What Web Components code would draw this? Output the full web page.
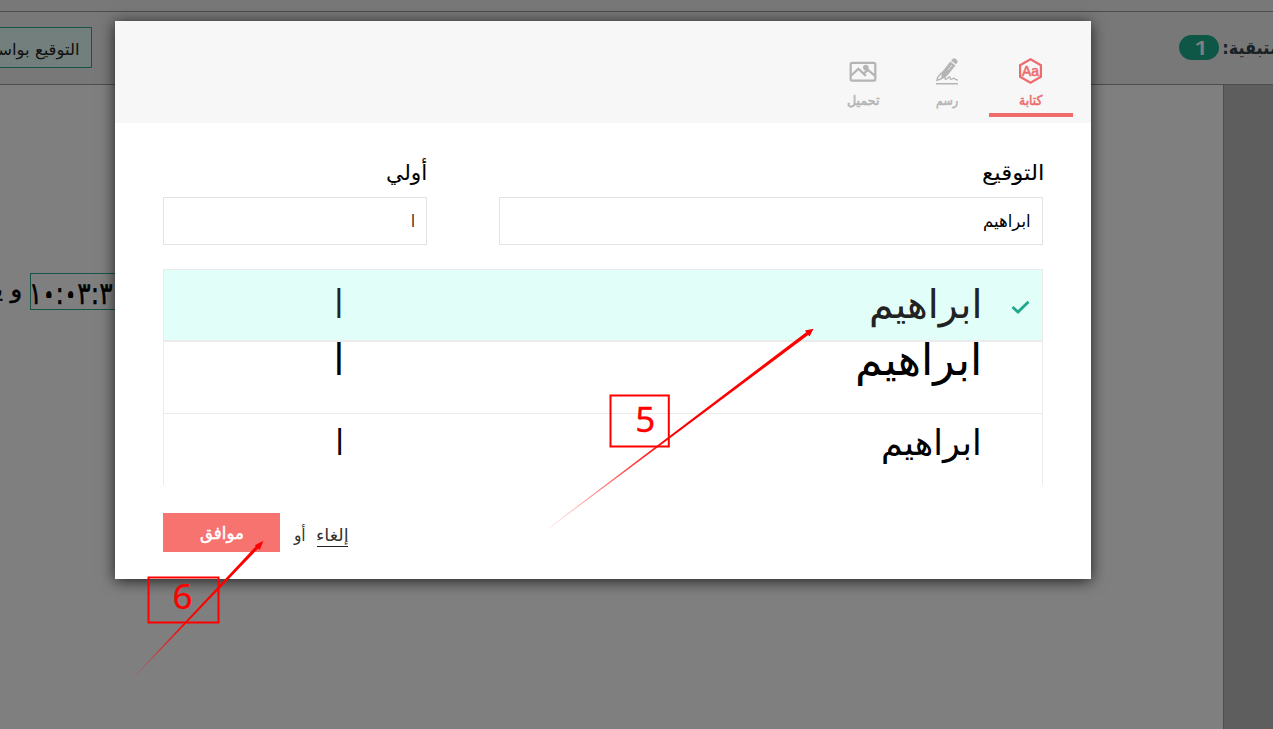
<!DOCTYPE html>
<html lang="ar">
<head>
<meta charset="utf-8">
<title>التوقيع</title>
<style>
html,body{margin:0;height:100%;overflow:hidden;background:#fff;font-family:"DejaVu Sans",sans-serif}
</style>
</head>
<body>
<sign-app></sign-app>
<script>
const FONT = '"DejaVu Sans",sans-serif';
const define = (name, html, setup) => customElements.define(name, class extends HTMLElement {
  connectedCallback() {
    if (this.shadowRoot) return;
    const t = document.createElement('template');
    t.innerHTML = html;
    this.attachShadow({mode: 'open'}).append(t.content.cloneNode(true));
    if (setup) setup(this, this.shadowRoot);
  }
});

/* Text run with a set ink width and baseline: w, size, base, h, weight, sy, heavy */
define('ink-text', `<style>
:host{display:block;direction:ltr;flex:none;white-space:nowrap}
span{display:inline-block;vertical-align:top;transform-origin:0 0}
:host([heavy]) span{-webkit-text-stroke:.5px currentColor}
</style><span><slot></slot></span>`, (el, root) => {
  const n = (k, d) => el.hasAttribute(k) ? parseFloat(el.getAttribute(k)) : d;
  const w = n('w', 20), size = n('size', 16), base = n('base', size), h = n('h', size * 1.3), sy = n('sy', 1);
  const weight = el.getAttribute('weight') || '400', family = el.getAttribute('family') || FONT;
  const c = document.createElement('canvas').getContext('2d');
  c.font = weight + ' ' + size + 'px ' + family;
  c.direction = 'ltr'; c.textAlign = 'left';
  const m = c.measureText(el.textContent);
  const sx = w / (m.actualBoundingBoxLeft + m.actualBoundingBoxRight);
  const y0 = h / 2 + (m.fontBoundingBoxAscent - m.fontBoundingBoxDescent) / 2;
  el.style.width = w + 'px';
  el.style.height = h + 'px';
  const s = root.querySelector('span');
  s.style.font = weight + ' ' + size + 'px/' + h + 'px ' + family;
  s.style.transform = `translate(${m.actualBoundingBoxLeft * sx}px,${base - y0 * sy}px) scale(${sx},${sy})`;
});

define('count-badge', `<style>
:host{display:flex;justify-content:center;width:40px;height:25px;border-radius:12.5px;background:#1cae8e;color:#fff;flex:none}
</style><slot></slot>`);

define('top-bar', `<style>
:host{display:flex;justify-content:space-between;height:72px;background:#f0f0f0;border:solid #9a9a9a;border-width:1px 0;box-sizing:content-box;margin-top:11px}
.by{box-sizing:border-box;width:92px;height:41px;margin-top:15px;border:1px solid #2aa88e;border-left:0;background:#e6fff9;display:flex;justify-content:flex-end;padding-right:13px;overflow:hidden;color:#222}
.left{display:flex;width:94px;gap:5px;padding-top:23px;overflow:hidden;color:#34424a}
</style>
<div class="by"><ink-text w="101" size="16" h="39" base="27">التوقيع بواسطة</ink-text></div>
<div class="left"><count-badge><ink-text w="9" size="20" h="25" base="19.5" weight="600" family="'Open Sans',sans-serif">1</ink-text></count-badge>
<ink-text w="67" size="18" h="25" base="19" weight="700">المتبقية:&rlm;</ink-text></div>`);

define('doc-page', `<style>
:host{display:flex;flex:1;background:#bcbcbc}
.page{width:1223px;background:#fff;border-right:1px solid #9a9a9a;padding-top:188px;box-sizing:content-box}
.line{display:flex;align-items:flex-start;color:#000}
.word{width:21px;display:flex;justify-content:flex-end;overflow:hidden;margin-right:9px}
.stamp{display:flex;box-sizing:border-box;width:150px;height:37px;border:1px solid #2aa88e;padding-left:1px}
b{font-weight:400;text-shadow:1px 1px,-1px 1px,1px -1px,-1px -1px,1.4px 0,-1.4px 0,0 1.2px,0 -1.2px}
</style>
<div class="page"><div class="line">
<div class="word"><ink-text w="47" size="23" h="37" base="24" heavy>و يتم</ink-text></div>
<div class="stamp"><ink-text w="80" size="31" h="35" base="30" heavy>١<b>٠</b>:<b>٠</b>٣:٣</ink-text></div>
</div></div>`);

define('mode-tab', `<style>
:host{display:flex;flex-direction:column;align-items:center;box-sizing:border-box;width:84px;height:62px;border-bottom:4px solid transparent;color:#b4b4b4}
:host([active]){color:#ee6c6e;border-color:#ee6c6e}
.icon{height:34px}
</style><div class="icon"><slot name="icon"></slot></div><slot></slot>`);

define('text-field', `<style>
:host{display:flex;flex-direction:column}
.label{height:42px;color:#000;padding-right:1px}
.box{box-sizing:border-box;height:48px;border:1px solid #e3e3e3;padding-right:12px;color:#000}
</style><div class="label"><slot name="label"></slot></div><div class="box"><slot></slot></div>`);

define('style-row', `<style>
:host{display:flex;box-sizing:border-box;height:72px;border:1px solid #ebebeb;border-bottom:0;color:#000;overflow:hidden}
:host([selected]){background:#e2fef9;border-bottom:1px solid #ebebeb;color:#222}
.mark{width:63px;box-sizing:border-box;padding:30px 12px 0 0}
.mark svg{display:none}
:host([selected]) svg{display:block}
.name{width:638px}.init{flex:1}
</style><div class="mark"><svg width="19" height="14" viewBox="0 0 19 14"><path d="M1.5 7 7 12 17.5 1.7" fill="none" stroke="#1fa98c" stroke-width="2.8"/></svg></div>
<div class="name"><slot></slot></div><div class="init"><slot name="init"></slot></div>`);

define('sign-dialog', `<style>
:host{display:flex;flex-direction:column;direction:rtl;width:976px;height:558px;background:#fff;box-shadow:0 2px 14px rgba(0,0,0,.75)}
header{display:flex;box-sizing:border-box;height:102px;background:#f7f7f7;padding:34px 18px 0 0}
.fields{display:flex;gap:72px;padding:32px 48px 0}
.sig{width:544px}.ini{width:264px}
.list{margin:24px 48px 0;height:216px;overflow:hidden}
footer{display:flex;justify-content:flex-end;padding:28px 48px 0;color:#333}
.cancel{height:33px;border-bottom:1px solid #222;margin-left:12px}
.or{margin-left:13px}
.ok{display:flex;justify-content:center;width:117px;height:39px;background:#f67370;color:#fff}
svg{display:block}
</style>
<header>
<mode-tab active><svg slot="icon" width="28" height="34" viewBox="0 0 28 34"><path d="M13.5 4.3 23.9 10.2v11.6L13.5 27.7 3.1 21.8V10.2Z" fill="none" stroke="currentColor" stroke-width="2.2"/><text x="13.6" y="20.8" direction="ltr" text-anchor="middle" font-family="Liberation Sans,sans-serif" font-size="14" textLength="17" lengthAdjust="spacingAndGlyphs" fill="currentColor" stroke="currentColor" stroke-width=".6">Aa</text></svg>
<ink-text w="23.5" size="12.5" h="20" base="17" sy="1.08" heavy>كتابة</ink-text></mode-tab>
<mode-tab><svg slot="icon" width="28" height="34" viewBox="0 0 28 34"><g fill="currentColor"><path d="M19.4 4.3q1.4-1.6 3-.5l1.5 1.1q1.4 1.1.4 2.7l-1.2 1.7-5-3.6Z"/><path d="m17.3 6.6 5.2 3.8-9 11.2-5.2 1.4.3-5.4Z"/><path d="M3 28h22v1.5H3z"/></g><path d="m18.6 10.4-3.6 4.6" stroke="#f7f7f7" stroke-width="1" stroke-dasharray="2 1.2"/><path d="M8.6 17.6 4.6 22.6l-.6 2.6c2.4-.6 5-1.6 7.7-3.3.8.2-.2 2.2 1 2.4 2 0 2.7-2.6 4-2.4.9.4 0 2.2 1.2 2.5 1.6 0 2-1.5 3.4-1 .8.6.6 1.6 3.6 1.6" fill="none" stroke="currentColor" stroke-width="1.4"/></svg>
<ink-text w="22" size="12.5" h="20" base="17" sy="1.08" heavy>رسم</ink-text></mode-tab>
<mode-tab><svg slot="icon" width="28" height="34" viewBox="0 0 28 34"><g fill="none" stroke="currentColor" stroke-width="2.2"><rect x="1.7" y="7.8" width="24.6" height="17.8" rx="1.5"/><path d="m2.5 20.3 6.9-6.6 7.5 7.2M14.5 18.6l4.5-3.6 7 5.9"/></g><circle cx="16.8" cy="12.6" r="2.8" fill="currentColor"/></svg>
<ink-text w="33" size="12.5" h="20" base="17" sy="1.08" heavy>تحميل</ink-text></mode-tab>
</header>
<div class="fields">
<text-field class="sig"><ink-text slot="label" w="59.5" size="21" h="42" base="24.7" sy="1.03">التوقيع</ink-text><ink-text w="46" size="17" h="46" base="29">ابراهيم</ink-text></text-field>
<text-field class="ini"><ink-text slot="label" w="39.5" size="21" h="42" base="24.7" sy="1.03">أولي</ink-text><ink-text w="2.2" size="17" h="46" base="29">ا</ink-text></text-field>
</div>
<div class="list">
<style-row selected><ink-text w="108.5" size="39" h="70" base="48">ابراهيم</ink-text><ink-text slot="init" w="4" size="39" h="70" base="48">ا</ink-text></style-row>
<style-row><ink-text w="121" size="44" h="70" base="33">ابراهيم</ink-text><ink-text slot="init" w="4.2" size="44" h="70" base="33">ا</ink-text></style-row>
<style-row><ink-text w="96" size="35" h="70" base="41">ابراهيم</ink-text><ink-text slot="init" w="3.4" size="35" h="70" base="41">ا</ink-text></style-row>
</div>
<footer>
<div class="cancel"><ink-text w="31" size="17" h="33" base="28">إلغاء</ink-text></div>
<div class="or"><ink-text w="12" size="17" h="33" base="28">أو</ink-text></div>
<div class="ok"><ink-text w="43" size="16.5" h="39" base="26" sy="1.05" heavy>موافق</ink-text></div>
</footer>`);

/* Numbered callouts drawn over the screen */
define('step-marks', `<style>
:host{position:absolute;inset:0;pointer-events:none}
svg{display:block}
</style><svg width="1273" height="729" viewBox="0 0 1273 729">
<defs><linearGradient id="a" gradientUnits="userSpaceOnUse" x1="549" y1="528" x2="813" y2="329"><stop offset="0" stop-color="red" stop-opacity=".1"/><stop offset=".45" stop-color="red"/></linearGradient>
<linearGradient id="b" gradientUnits="userSpaceOnUse" x1="134" y1="677" x2="263" y2="541"><stop offset="0" stop-color="red" stop-opacity=".1"/><stop offset=".4" stop-color="red"/></linearGradient></defs>
<g fill="none" stroke="red" stroke-width="2"><rect x="610.5" y="395.5" width="58.3" height="51"/><rect x="148.5" y="577.5" width="70" height="45"/></g>
<path fill="url(#a)" d="M548.8 527.8 806.2 332.3 805 330.6 813.5 328.8 809.6 336.5 808.2 334.9 549.2 528.3Z"/>
<path fill="url(#b)" d="M133.8 676.8 255.8 546.3 254.8 545.3 263.5 540.8 259.8 549.8 258.2 548.5 134.3 677.2Z"/>
<g fill="red" stroke="red" stroke-width=".3" font-family="Noto Sans,sans-serif" font-size="35" text-anchor="middle"><text x="645.3" y="431.7">5</text><text x="182.5" y="608.7">6</text></g>
</svg>`);

define('sign-app', `<style>
:host{display:flex;flex-direction:column;position:relative;width:1273px;height:729px;overflow:hidden;background:#f0f0f0}
.overlay{position:absolute;inset:0;background:rgba(0,0,0,.5);padding:21px 0 0 115px}
</style><top-bar></top-bar><doc-page></doc-page><div class="overlay"><sign-dialog></sign-dialog></div><step-marks></step-marks>`);
</script>
</body>
</html>
